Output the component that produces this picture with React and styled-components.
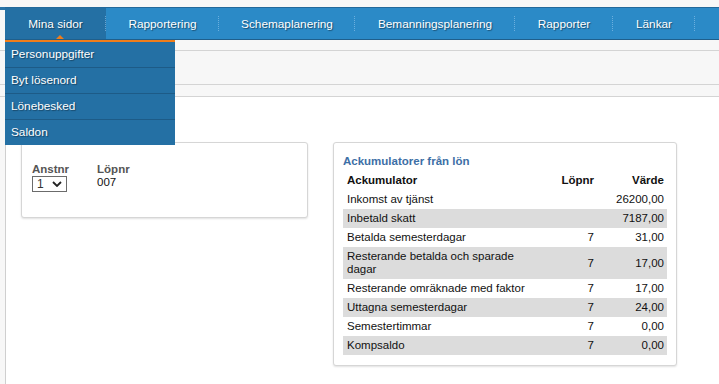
import React from "react";
import styled, { createGlobalStyle } from "styled-components";

const GlobalStyle = createGlobalStyle`
  html, body {
    margin: 0;
    padding: 0;
    background: #f7f7f7;
    font-family: "Liberation Sans", Arial, sans-serif;
    font-size: 11.5px;
    color: #111;
  }
`;

const Page = styled.div`
  min-height: 384px;
  padding-top: 7px;
  display: flex;
  flex-direction: column;
`;

const Header = styled.header`
  position: relative;
  padding-left: 5px;
  background: linear-gradient(#2a74a8 0 3px, transparent 3px);
`;

const NavBar = styled.nav`
  display: flex;
  height: 31px;
  background: #2b8ac7;
  border-top: 1px solid #22699b;
  border-bottom: 1px solid #1f5f8c;
`;

const NavItem = styled.div`
  position: relative;
  display: flex;
  align-items: center;
  justify-content: center;
  width: ${(p) => p.$width}px;
  flex: none;
  color: #fff;
  font-size: 11.8px;
  text-shadow: 1px 1px 1px rgba(0, 0, 0, 0.45);
  background: ${(p) => (p.$active ? "#2470a4" : "transparent")};
  white-space: nowrap;
  &::after {
    content: "";
    position: absolute;
    right: 0;
    top: 8px;
    bottom: 8px;
    border-right: 1px dotted rgba(160, 205, 240, 0.55);
  }
`;

const Caret = styled.span`
  position: absolute;
  left: 51px;
  bottom: 0;
  width: 0;
  height: 0;
  border-left: 4px solid transparent;
  border-right: 4px solid transparent;
  border-bottom: 4px solid #f07d1a;
`;

const Dropdown = styled.ul`
  position: absolute;
  top: 33px;
  left: 5px;
  width: 170px;
  margin: 0;
  padding: 0;
  list-style: none;
  border-top: 2px solid #f07d1a;
  background: #2470a4;
  z-index: 5;
`;

const DropItem = styled.li`
  height: 25px;
  line-height: 25px;
  padding-left: 6px;
  color: #fff;
  font-size: 11.8px;
  text-shadow: 1px 1px 1px rgba(0, 0, 0, 0.4);
  border-bottom: 1px solid #1d5b87;
  &:last-child {
    border-bottom: none;
  }
`;

const Toolbar = styled.div`
  margin-top: 10px;
  height: 33px;
  background: #f7f7f7;
  border-top: 1px solid #d4d4d4;
  border-bottom: 1px solid #d4d4d4;
`;

const SubBar = styled.div`
  height: 11px;
  background: #f7f7f7;
  border-bottom: 1px solid #d4d4d4;
`;

const Main = styled.main`
  flex: 1;
  margin-left: 5px;
  border-left: 1px solid #cfcfcf;
  background: #fff;
  padding: 45px 15px 15px;
  display: flex;
  align-items: flex-start;
  gap: 25px;
`;

const Card = styled.section`
  width: ${(p) => p.$width}px;
  box-sizing: border-box;
  border: 1px solid #d6d6d6;
  border-radius: 3px;
  box-shadow: 0 1px 2px rgba(0, 0, 0, 0.12);
  background: #fff;
  padding: ${(p) => p.$pad};
`;

const Fields = styled.div`
  display: flex;
  gap: 28px;
`;

const Field = styled.div`
  display: flex;
  flex-direction: column;
`;

const Label = styled.span`
  font-weight: bold;
  color: #555;
  line-height: 13px;
`;

const Value = styled.span`
  line-height: 12px;
`;

const SelectBox = styled.div`
  display: flex;
  align-items: center;
  justify-content: space-between;
  width: 35px;
  height: 16px;
  box-sizing: border-box;
  border: 1px solid #6b6b6b;
  padding: 0 4px;
  font-size: 12px;
  color: #333;
`;

const Title = styled.h3`
  margin: 0 0 1px;
  font-size: 11.5px;
  line-height: 16px;
  font-weight: bold;
  color: #3d6fa6;
`;

const Table = styled.table`
  width: 100%;
  border-collapse: collapse;
  table-layout: fixed;
`;

const Th = styled.th`
  padding: 4px 3px 3px 4px;
  line-height: 13px;
  text-align: ${(p) => p.$align || "left"};
  font-weight: bold;
  color: #111;
`;

const Tr = styled.tr`
  background: ${(p) => (p.$shade ? "#dcdcdc" : "#fff")};
`;

const Td = styled.td`
  padding: 3px 3px 3px 4px;
  line-height: 13px;
  text-align: ${(p) => p.$align || "left"};
  vertical-align: middle;
`;

const navItems = [
  ["Mina sidor", 101],
  ["Rapportering", 113],
  ["Schemaplanering", 136],
  ["Bemanningsplanering", 160],
  ["Rapporter", 98],
  ["Länkar", 82],
];

const menuItems = ["Personuppgifter", "Byt lösenord", "Lönebesked", "Saldon"];

const rows = [
  ["Inkomst av tjänst", "", "26200,00"],
  ["Inbetald skatt", "", "7187,00"],
  ["Betalda semesterdagar", "7", "31,00"],
  ["Resterande betalda och sparade dagar", "7", "17,00"],
  ["Resterande omräknade med faktor", "7", "17,00"],
  ["Uttagna semesterdagar", "7", "24,00"],
  ["Semestertimmar", "7", "0,00"],
  ["Kompsaldo", "7", "0,00"],
];

const Chevron = () => (
  <svg width="10" height="6" viewBox="0 0 10 6">
    <path d="M1 1 L5 5 L9 1" fill="none" stroke="#222" strokeWidth="1.8" />
  </svg>
);

export default function App() {
  return (
    <Page>
      <GlobalStyle />
      <Header>
        <NavBar>
          {navItems.map(([item, w], i) => (
            <NavItem key={item} $width={w} $active={i === 0}>
              {item}
              {i === 0 && <Caret />}
            </NavItem>
          ))}
        </NavBar>
        <Dropdown>
          {menuItems.map((m) => (
            <DropItem key={m}>{m}</DropItem>
          ))}
        </Dropdown>
      </Header>
      <Toolbar />
      <SubBar />
      <Main>
        <Card $width={287} $pad="20px 10px 25px">
          <Fields>
            <Field>
              <Label>Anstnr</Label>
              <SelectBox>
                1
                <Chevron />
              </SelectBox>
            </Field>
            <Field>
              <Label>Löpnr</Label>
              <Value>007</Value>
            </Field>
          </Fields>
        </Card>
        <Card $width={344} $pad="10px 9px 10px">
          <Title>Ackumulatorer från lön</Title>
          <Table>
            <colgroup>
              <col style={{ width: 200 }} />
              <col style={{ width: 54 }} />
              <col style={{ width: 70 }} />
            </colgroup>
            <thead>
              <tr>
                <Th>Ackumulator</Th>
                <Th $align="right">Löpnr</Th>
                <Th $align="right">Värde</Th>
              </tr>
            </thead>
            <tbody>
              {rows.map(([name, nr, val], i) => (
                <Tr key={name} $shade={i % 2 === 1}>
                  <Td>{name}</Td>
                  <Td $align="right">{nr}</Td>
                  <Td $align="right">{val}</Td>
                </Tr>
              ))}
            </tbody>
          </Table>
        </Card>
      </Main>
    </Page>
  );
}
